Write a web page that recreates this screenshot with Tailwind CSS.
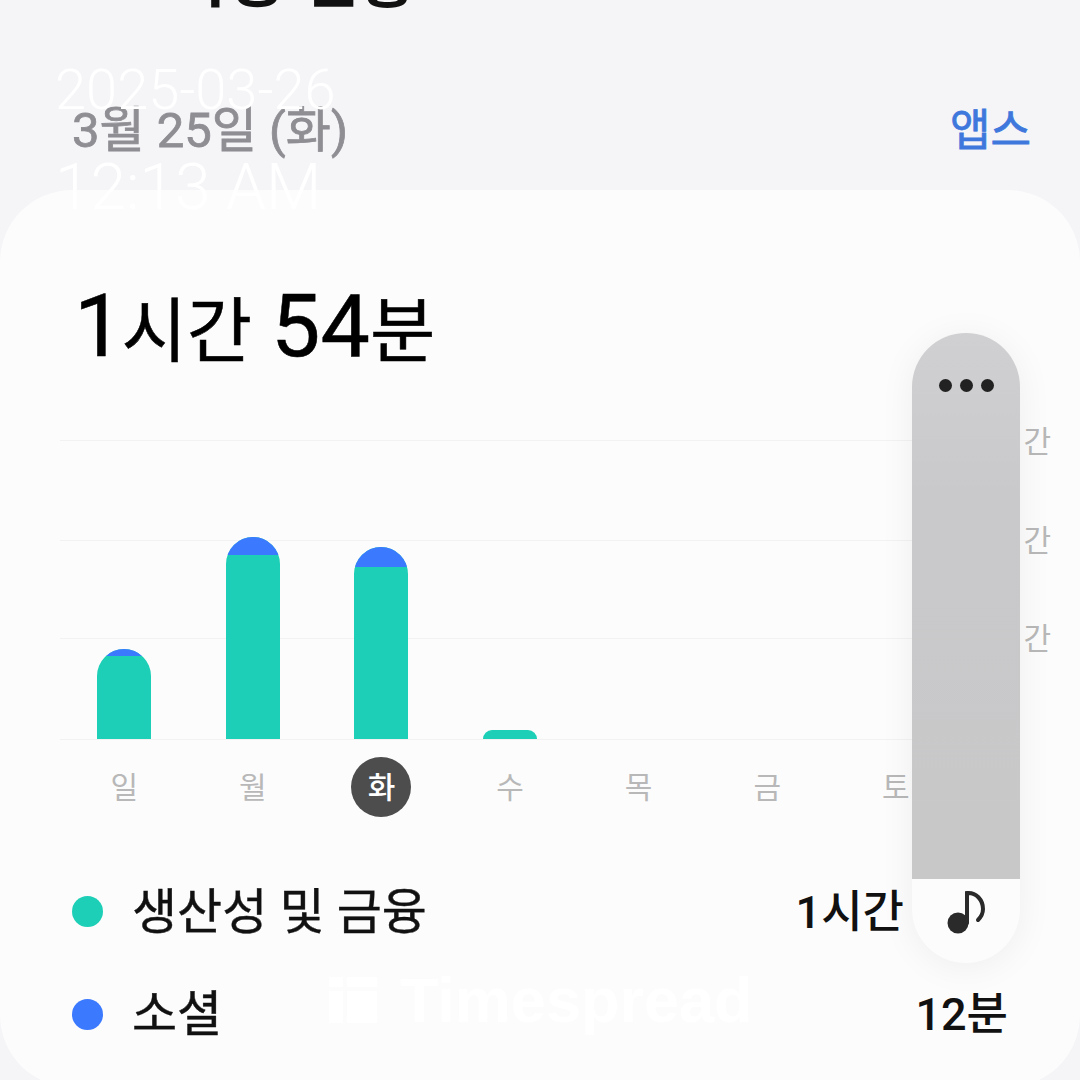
<!DOCTYPE html>
<html lang="ko">
<head>
    <meta charset="UTF-8">
    <title>Screen time</title>
    <script src="https://cdn.jsdelivr.net/npm/@tailwindcss/browser@4"></script>
</head>
<body class="bg-[#f5f5f8] font-['Roboto','Noto_Sans_CJK_KR',sans-serif]">
<div class="relative w-[1080px] h-[1080px] overflow-hidden">

    <!-- cut off title -->
    <div class="h-[104px] -mt-[49px] mb-[49px] pl-[172px] text-[62px] leading-[60px] font-bold text-[#111]">
        사용 현황
    </div>

    <!-- date row -->
    <div class="h-[86px] pl-[72px] pr-[49px] flex justify-between items-start">
        <span class="text-[49px] leading-[54px] text-[#8e8e93] [-webkit-text-stroke:0.8px_#8e8e93]">3월 25일 (화)</span>
        <span class="text-[44px] leading-[54px] text-[#3f78dc] [-webkit-text-stroke:0.8px_#3f78dc]">앱스</span>
    </div>

    <!-- card -->
    <div class="h-[897px] rounded-[72px] bg-[#fcfcfc] pl-[60px] pr-[29px]">
        <div class="pt-[86px] pl-[14px] h-[250px] text-black leading-none whitespace-nowrap [-webkit-text-stroke:0.5px_#000]">
            <span class="text-[88px] leading-[100px]">1</span><span class="text-[71px] -ml-[2px]">시간</span><span class="text-[88px] leading-[100px] ml-[19px]">54</span><span class="text-[71px]">분</span>
        </div>

        <!-- chart -->
        <div class="relative h-[300px]">
            <div class="absolute left-0 w-[960px] top-0 border-t border-[#f2f2f2]"></div>
            <div class="absolute left-0 w-[960px] top-[100px] border-t border-[#f2f2f2]"></div>
            <div class="absolute left-0 w-[960px] top-[198px] border-t border-[#f2f2f2]"></div>
            <div class="absolute left-0 w-[960px] bottom-0 border-t border-[#f2f2f2]"></div>
            <span class="absolute right-0 top-[-16px] text-[30px] leading-9 text-[#b8b8b8]">간</span>
            <span class="absolute right-0 top-[83px] text-[30px] leading-9 text-[#b8b8b8]">간</span>
            <span class="absolute right-0 top-[181px] text-[30px] leading-9 text-[#b8b8b8]">간</span>

            <div class="absolute left-0 top-0 bottom-[1px] flex items-end w-[900px]">
                <div class="w-[128.6px] flex justify-center">
                    <div class="w-[54px] h-[90px] rounded-t-[27px] bg-[#1dcfb6] overflow-hidden"><div class="h-[7px] bg-[#3b79ff]"></div></div>
                </div>
                <div class="w-[128.6px] flex justify-center">
                    <div class="w-[54px] h-[202px] rounded-t-[27px] bg-[#1dcfb6] overflow-hidden"><div class="h-[18px] bg-[#3b79ff]"></div></div>
                </div>
                <div class="w-[128.6px] flex justify-center">
                    <div class="w-[54px] h-[192px] rounded-t-[27px] bg-[#1dcfb6] overflow-hidden"><div class="h-[20px] bg-[#3b79ff]"></div></div>
                </div>
                <div class="w-[128.6px] flex justify-center">
                    <div class="w-[54px] h-[9px] rounded-t-[9px] bg-[#1dcfb6]"></div>
                </div>
            </div>
        </div>

        <!-- day labels -->
        <div class="flex pt-[17px] h-[147px] text-[30px] text-[#b8b8b8]">
            <div class="w-[128.6px] h-[60px] flex items-center justify-center">일</div>
            <div class="w-[128.6px] h-[60px] flex items-center justify-center">월</div>
            <div class="w-[128.6px] h-[60px] flex items-center justify-center"><span class="w-[60px] h-[60px] rounded-full bg-[#4d4d4d] text-white font-medium flex items-center justify-center">화</span></div>
            <div class="w-[128.6px] h-[60px] flex items-center justify-center">수</div>
            <div class="w-[128.6px] h-[60px] flex items-center justify-center">목</div>
            <div class="w-[128.6px] h-[60px] flex items-center justify-center">금</div>
            <div class="w-[128.6px] h-[60px] flex items-center justify-center">토</div>
        </div>

        <!-- legend -->
        <div class="flex flex-col gap-[50px] pl-[12px] pr-[43px] text-[#111]">
            <div class="flex items-center h-[52px]">
                <span class="w-[31px] h-[31px] rounded-full bg-[#1dcfb6] mr-[29px] -translate-y-[2px]"></span>
                <span class="text-[49px] leading-[52px] [-webkit-text-stroke:0.4px_#111]">생산성 및 금융</span>
                <span class="ml-auto text-[45px] leading-[52px] font-medium mr-[104px]">1시간</span>
            </div>
            <div class="flex items-center h-[52px]">
                <span class="w-[31px] h-[31px] rounded-full bg-[#3b79ff] mr-[29px] -translate-y-[1px]"></span>
                <span class="text-[49px] leading-[52px] [-webkit-text-stroke:0.4px_#111]">소셜</span>
                <span class="ml-auto text-[45px] leading-[52px] font-medium">12분</span>
            </div>
        </div>
    </div>

    <!-- floating edge handle -->
    <div class="absolute left-[912px] top-[333px] w-[108px] h-[630px] rounded-[54px] overflow-hidden bg-[#fcfcfc] shadow-[0_4px_36px_rgba(0,0,0,0.06)]">
        <div class="h-[546px] bg-linear-to-b from-[#d0d0d2] via-[#c9c9cb] via-30% to-[#c8c8c9] flex justify-center gap-[8px] pt-[46px]">
            <span class="w-[13px] h-[13px] rounded-full bg-[#222]"></span>
            <span class="w-[13px] h-[13px] rounded-full bg-[#222]"></span>
            <span class="w-[13px] h-[13px] rounded-full bg-[#222]"></span>
        </div>
        <svg class="absolute left-[32px] top-[556px]" width="44" height="48" viewBox="0 0 44 48" fill="none">
            <circle cx="14" cy="34" r="10.5" fill="#2a2a2a"/>
            <path d="M23 34V4C32 3 39 11 39 20C39 25 37 28 34 31" stroke="#2a2a2a" stroke-width="4" stroke-linecap="round"/>
        </svg>
    </div>

    <!-- watermark -->
    <div class="absolute left-[55px] top-[60px] text-white font-light whitespace-nowrap">
        <div class="text-[56px] leading-[60px]">2025-03-26</div>
        <div class="text-[64px] leading-[70px] mt-[33px]">12:13 AM</div>
    </div>
    <div class="absolute left-[329px] top-[975px] flex items-center gap-[23px] text-white">
        <svg width="48" height="46" viewBox="0 0 48 46" fill="#fff">
            <rect x="0" y="0" width="14" height="10"/><rect x="0" y="14" width="14" height="32"/>
            <rect x="18" y="0" width="30" height="10"/><rect x="18" y="14" width="30" height="32"/>
        </svg>
        <span class="text-[63px] leading-[50px] font-bold font-['Liberation_Sans',sans-serif]">Timespread</span>
    </div>
</div>
</body>
</html>
